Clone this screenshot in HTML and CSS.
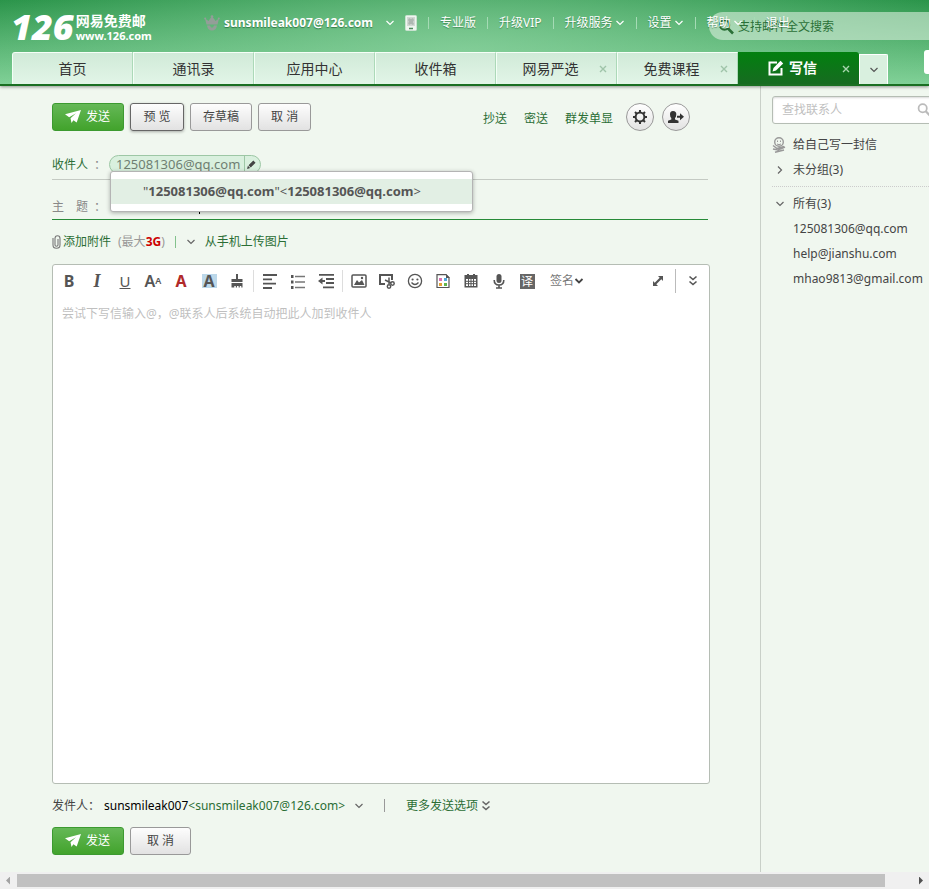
FILE: index.html
```html
<!DOCTYPE html>
<html lang="zh-CN">
<head>
<meta charset="utf-8">
<title>写信 - 126网易免费邮</title>
<link rel="stylesheet" href="styles.css">
</head>
<body>
<svg class="defs" aria-hidden="true">
  <symbol id="chev" viewBox="0 0 10 8"><path d="M1.500 2L5 5.500 8.500 2" fill="none" stroke="currentColor" stroke-width="1.200"/></symbol>
  <symbol id="dbl" viewBox="0 0 10 12"><path d="M1.500 1.500L5 4.500l3.500-3M1.500 6.500L5 9.500l3.500-3" fill="none" stroke="currentColor" stroke-width="1.600"/></symbol>
  <symbol id="close" viewBox="0 0 8 8"><path d="M1 1l6 6M7 1l-6 6" stroke="currentColor" stroke-width="1.400"/></symbol>
  <symbol id="plane" viewBox="0 0 18 14"><path d="M17 0L1 4.300 5.200 7.200 12 3.300 6.500 8.200 7.500 13 9.400 10.200 12.700 12.400z" fill="currentColor"/></symbol>
  <symbol id="glass" viewBox="0 0 16 16"><circle cx="6.500" cy="6" r="4.700" fill="none" stroke="currentColor" stroke-width="2"/><path d="M10 9.500l5 5" stroke="currentColor" stroke-width="2.600"/></symbol>
</svg>

<header class="header">
  <div class="top">
    <a class="logo" href="#"><span class="logo-num">126</span><span class="logo-text"><span class="logo-name">网易免费邮</span><span class="logo-url">www.126.com</span></span></a>
    <form class="search">
      <svg class="i16"><use href="#glass"/></svg>
      <input type="text" aria-label="支持邮件全文搜索" placeholder="支持邮件全文搜索">
    </form>
    <div class="account">
      <svg class="crown" viewBox="0 0 16 16"><path d="M1 3.500l3.500 2.500L8 1l3.500 5L15 3.500 13.500 9.500h-11zM3 10.500h3l1 2h2l1-2h3q-.8 5-5 5t-5-5z" fill="#939e98"/><circle cx="8" cy="1.500" r="1.300" fill="#939e98"/><circle cx="1.200" cy="3.600" r="1" fill="#939e98"/><circle cx="14.800" cy="3.600" r="1" fill="#939e98"/></svg>
      <a class="user" href="#">sunsmileak007@126.com</a>
      <svg class="chev user-chev"><use href="#chev"/></svg>
      <svg class="phone" viewBox="0 0 12 16"><rect x=".5" y=".5" width="11" height="15" rx="1" fill="#eef6f0" stroke="#c9e2d0"/><path d="M2 2h8v9H2z" fill="#d2d8d4"/><path d="M4 3l2 1 2-1 1 2-1 2 1 2-1 1-2-1-2 1-1-2 1-1-1-2z" fill="#aeb8b2"/><path d="M4 13.500h4" stroke="#4c8a5c" stroke-width="1.500"/></svg>
    </div>
    <nav class="links">
      <a href="#">专业版</a>
      <a href="#">升级VIP</a>
      <a href="#">升级服务<svg class="chev"><use href="#chev"/></svg></a>
      <a href="#">设置<svg class="chev"><use href="#chev"/></svg></a>
      <a href="#">帮助<svg class="chev"><use href="#chev"/></svg></a>
      <a href="#">退出</a>
    </nav>
  </div>
  <nav class="tabs">
    <a class="tab" href="#">首页</a>
    <a class="tab" href="#">通讯录</a>
    <a class="tab" href="#">应用中心</a>
    <a class="tab" href="#">收件箱</a>
    <a class="tab closable" href="#">网易严选<svg class="close"><use href="#close"/></svg></a>
    <a class="tab closable" href="#">免费课程<svg class="close"><use href="#close"/></svg></a>
    <a class="tab closable active" href="#"><svg class="i16" viewBox="0 0 16 16"><path d="M9 2.500H1.500v12h12V8" fill="none" stroke="#fff" stroke-width="2"/><path d="M4.500 11.500l1-3.500L12.500.8l2.700 2.700L8 10.500z" fill="#fff"/></svg>写信<svg class="close"><use href="#close"/></svg></a>
    <button class="more" aria-label="更多标签"><svg class="chev"><use href="#chev"/></svg></button>
    <span class="bubble"></span>
  </nav>
</header>

<div class="body">
  <main class="compose">
    <div class="actions">
      <button class="btn send"><svg class="plane"><use href="#plane"/></svg>发送</button>
      <button class="btn focus">预 览</button>
      <button class="btn">存草稿</button>
      <button class="btn">取 消</button>
      <div class="extras">
        <a href="#">抄送</a>
        <a href="#">密送</a>
        <a href="#">群发单显</a>
        <button class="round" aria-label="设置"><svg class="i16" viewBox="0 0 16 16"><circle cx="8" cy="8" r="4.400" fill="none" stroke="#333" stroke-width="2"/><path d="M8 1v3M8 12v3M1 8h3M12 8h3M3 3l2.200 2.200M10.800 10.800L13 13M13 3l-2.200 2.200M5.200 10.800L3 13" stroke="#333" stroke-width="2"/></svg></button>
        <button class="round" aria-label="添加联系人"><svg class="i18" viewBox="0 0 18 16"><path d="M6 2q3.500 0 3.300 3.600Q9.200 8 8 9v1.500l3.500 1.300V14H1v-2.200L4.300 10.500V9Q3 8 3 5.600 2.800 2 6 2zM10 6.800h3V4.300l4 3.500-4 3.500V8.800h-3z" fill="#333"/></svg></button>
      </div>
    </div>

    <div class="row to">
      <a class="label" href="#">收件人</a><span class="colon">：</span>
      <span class="chip"><span class="chip-name">125081306@qq.com</span><button class="edit" aria-label="编辑"><svg viewBox="0 0 10 10"><path d="M0 10l1-3.500L3.500 9zM1.700 5.800L7 .5 9.500 3 4.200 8.300z" fill="#444"/></svg></button></span>
      <div class="suggest"><div class="option">"<b>125081306@qq.com</b>"&lt;<b>125081306@qq.com</b>&gt;</div></div>
    </div>
    <div class="row subject">
      <label class="subject-label" for="subject">主&emsp;题</label><span class="colon">：</span>
      <input id="subject" type="text"><span class="caret"></span>
    </div>
    <div class="attach">
      <svg class="clip" viewBox="0 0 9 14"><path d="M1 3v7q0 3.300 3.500 3.300T8 10V3.500Q8 .7 5.500.7T3 3.500V10q0 1.200 1.500 1.200T6 10V4" fill="none" stroke="#777" stroke-width="1.100"/></svg>
      <a href="#">添加附件</a><span class="limit">(最大<b>3G</b>)</span><span class="bar"></span>
      <svg class="chev grey"><use href="#chev"/></svg>
      <a class="mobile" href="#">从手机上传图片</a>
    </div>

    <section class="editor">
      <div class="tools">
        <button class="tool" aria-label="加粗"><b>B</b></button>
        <button class="tool serif" aria-label="斜体"><i>I</i></button>
        <button class="tool" aria-label="下划线"><u>U</u></button>
        <button class="tool size" aria-label="字号">A<small>A</small></button>
        <button class="tool red" aria-label="文字颜色"><b>A</b></button>
        <button class="tool" aria-label="背景颜色"><b class="hl">A</b></button>
        <button class="tool" aria-label="清除格式"><svg viewBox="0 0 16 16"><path d="M7 1h2v5h4.500v3h-11V6H7zM2.500 10h11v4.500h-1.200V13h-1.500v1.500H9.600V13H8v1.500H6.800V13H5.300v1.500H2.500z" fill="#555"/></svg></button>
        <span class="sep"></span>
        <button class="tool" aria-label="对齐"><svg viewBox="0 0 16 16"><path d="M1 2h14M1 6.300h9M1 10.600h13M1 15h9" stroke="#555" stroke-width="1.800"/></svg></button>
        <button class="tool" aria-label="列表"><svg viewBox="0 0 16 16"><path d="M5 3.500h10M5 9h10M5 14.500h10" stroke="#777" stroke-width="1.500"/><path d="M1 2h2.500v3H1zM1 7.500h2.500v3H1zM1 13h2.500v3H1z" fill="#555"/></svg></button>
        <button class="tool" aria-label="缩进"><svg viewBox="0 0 16 16"><path d="M1 1.800h15M8 6h8M8 10h8M5 14.400h11M2 8h5" stroke="#555" stroke-width="1.800"/><path d="M0 8l4.500-3.500v7z" fill="#555"/></svg></button>
        <span class="sep"></span>
        <button class="tool" aria-label="图片"><svg viewBox="0 0 16 16"><rect x="1" y="2" width="14" height="12" rx="1" fill="none" stroke="#555" stroke-width="1.500"/><path d="M3 12l3-5 2 2.500L11 7l2.500 5z" fill="#555"/><circle cx="11" cy="5" r="1.200" fill="#555"/></svg></button>
        <button class="tool" aria-label="截图"><svg viewBox="0 0 16 16"><path d="M13 7V2H1v9h5" fill="none" stroke="#555" stroke-width="2"/><path d="M6 7l6 3M10 4.500v6.500" stroke="#555" stroke-width="1.500"/><circle cx="13.500" cy="10.500" r="1.700" fill="none" stroke="#555" stroke-width="1.500"/><circle cx="10" cy="13.500" r="1.700" fill="none" stroke="#555" stroke-width="1.500"/></svg></button>
        <button class="tool" aria-label="表情"><svg viewBox="0 0 16 16"><circle cx="8" cy="8" r="6.600" fill="none" stroke="#555" stroke-width="1.300"/><circle cx="5.600" cy="6.500" r="1.100" fill="#555"/><circle cx="10.400" cy="6.500" r="1.100" fill="#555"/><path d="M4.500 9.500q3.500 4 7 0" fill="none" stroke="#555" stroke-width="1.300"/></svg></button>
        <button class="tool" aria-label="信纸"><svg viewBox="0 0 16 16"><path d="M2 1.700h9l3 3v9.800H2z" fill="#fff" stroke="#555" stroke-width="1.200"/><path d="M11 1v4h4z" fill="#555"/><path d="M4 5h3v3H4z" fill="#d971b4"/><path d="M9 5h3v3H9z" fill="#54a9dc"/><path d="M4 10h3v3H4z" fill="#e3a233"/><path d="M9 10h3v3H9z" fill="#63b64c"/></svg></button>
        <button class="tool" aria-label="日程"><svg viewBox="0 0 16 16"><path d="M2 2h2V1h2v1h4V1h2v1h2.500v12.500h-13V2z" fill="#555"/><path d="M3 6h10v7H3z" fill="#fff"/><path d="M3 8.300h10M3 10.700h10M5.500 6v7M8 6v7M10.500 6v7" stroke="#555"/></svg></button>
        <button class="tool" aria-label="语音"><svg viewBox="0 0 16 16"><rect x="5.500" y="1" width="5" height="9" rx="2.500" fill="#555"/><path d="M3.200 7q0 5 4.800 5t4.800-5M8 12v3M5 15h6" fill="none" stroke="#555" stroke-width="1.600"/></svg></button>
        <button class="tool" aria-label="翻译"><span class="trans">译</span></button>
        <button class="sign">签名<svg viewBox="0 0 10 8"><path d="M1.500 2L5 5.500 8.500 2" fill="none" stroke="#444" stroke-width="1.800"/></svg></button>
        <span class="grow"></span>
        <button class="tool" aria-label="全屏"><svg class="expand" viewBox="0 0 12 12"><path d="M6 1h5v5L9.300 4.300 4.300 9.300 6 11H1V6l1.700 1.700 5-5z" fill="#555"/></svg></button>
        <span class="sep tall"></span>
        <button class="tool" aria-label="更多"><svg class="dbl"><use href="#dbl"/></svg></button>
      </div>
      <textarea aria-label="正文" placeholder="尝试下写信输入@，@联系人后系统自动把此人加到收件人"></textarea>
    </section>

    <div class="sender">
      <span>发件人：</span><a class="from" href="#"><span class="from-name">sunsmileak007</span>&lt;sunsmileak007@126.com&gt;</a><svg class="chev grey"><use href="#chev"/></svg>
      <span class="pipe"></span>
      <a class="options" href="#">更多发送选项<svg class="dbl"><use href="#dbl"/></svg></a>
    </div>
    <div class="actions">
      <button class="btn send"><svg class="plane"><use href="#plane"/></svg>发送</button>
      <button class="btn wide">取 消</button>
    </div>
  </main>

  <aside class="contacts">
    <div class="find"><input type="text" aria-label="查找联系人" placeholder="查找联系人"><svg class="i16"><use href="#glass"/></svg></div>
    <a class="item" href="#"><svg class="self" viewBox="0 0 14 16"><circle cx="7" cy="5" r="4.300" fill="none" stroke="#999" stroke-width="1.400"/><path d="M5.500 3.500v1.500M8.500 3.500v1.500M5 7q2 1.300 4 0" fill="none" stroke="#999"/><path d="M1 8.500l4 3 7-2M1 12l5 1 7-3M3 15.300l9-2.300" fill="none" stroke="#999" stroke-width="1.500"/></svg>给自己写一封信</a>
    <a class="item" href="#"><svg class="chev grey right"><use href="#chev"/></svg>未分组(3)</a>
    <hr>
    <a class="item" href="#"><svg class="chev grey"><use href="#chev"/></svg>所有(3)</a>
    <ul>
      <li><a href="#">125081306@qq.com</a></li>
      <li><a href="#">help@jianshu.com</a></li>
      <li><a href="#">mhao9813@gmail.com</a></li>
    </ul>
  </aside>
</div>

<div class="scrollbar"><span class="arrow left"></span><span class="track"><span class="thumb"></span></span><span class="arrow"></span></div>
</body>
</html>
```
FILE: styles.css
```css
* { box-sizing: border-box; }
body {
  margin: 0;
  min-height: 100vh;
  display: flex;
  flex-direction: column;
  background: #f0f7ef;
  color: #444;
  font: 12px/20px "Noto Sans", "Noto Sans CJK SC", sans-serif;
  overflow: hidden;
}
a { color: #2b6e35; text-decoration: none; }
button, input, textarea { font: inherit; color: inherit; }
button { padding: 0; border: 0; background: none; cursor: pointer; }
input, textarea { border: 0; outline: 0; background: none; padding: 0; min-width: 0; }
svg { display: block; flex: none; }
.defs { position: absolute; width: 0; height: 0; }
.chev { width: 10px; height: 8px; }
.dbl { width: 10px; height: 12px; }
.plane { width: 18px; height: 14px; }
.i16 { width: 16px; height: 16px; }
.i18 { width: 18px; height: 16px; }
.grey { color: #666; }
.grow { flex: 1; }

/* header */
.header {
  position: relative;
  z-index: 2;
  background: radial-gradient(ellipse 520px 150px at 50% 60%, rgba(146, 214, 165, .7), rgba(146, 214, 165, 0)), linear-gradient(#279247, #7fd096);
  border-bottom: 2px solid #1a6f22;
  box-shadow: 0 1px 3px rgba(0, 0, 0, .4);
}
.top { position: relative; display: flex; height: 52px; overflow: hidden; white-space: nowrap; }
.logo { display: flex; width: 192px; padding-left: 11px; color: #fff; }
.logo-num { font: italic 800 36px/54px "Open Sans", sans-serif; }
.logo-text { display: flex; flex-direction: column; padding: 12px 0 0 2px; }
.logo-name { font: bold 14px/16px "Noto Sans CJK SC", sans-serif; }
.logo-url { font: bold 11px/16px "Noto Sans", sans-serif; }
.account { display: flex; align-items: center; height: 46px; padding-left: 12px; position: relative; }
.crown { width: 16px; height: 16px; margin-right: 4px; }
.user { color: #fff; font-weight: bold; text-shadow: 0 1px 1px rgba(0, 60, 20, .5); }
.user-chev { margin: 0 10px 0 12px; color: #fff; }
.phone { width: 12px; height: 16px; }
.links { display: flex; align-items: center; height: 46px; position: relative; color: #fff; }
.links a { display: flex; align-items: center; color: #fff; gap: 2px; padding-left: 12px; margin-left: 11px; text-shadow: 0 1px 1px rgba(0, 60, 20, .4); background: linear-gradient(#a5dbb5, #a5dbb5) 0 50% / 1px 12px no-repeat; }
.search { position: absolute; left: 709px; right: 0; top: 12px; height: 28px; display: flex; align-items: center; gap: 4px; padding: 1px 0 0 9px; border-radius: 14px 0 0 14px; background: rgba(218, 238, 221, .6); color: #2b7037; }
.search input { flex: 1; }
.search input::placeholder { color: #2b7037; opacity: 1; }
.tabs { display: flex; align-items: flex-end; padding-left: 12px; height: 32px; }
.tab {
  position: relative; display: flex; align-items: center; justify-content: center;
  width: 121px; height: 32px; font-size: 14px; color: #333;
  background: linear-gradient(#d0ead8, #e2f5e7);
  border-top: 1px solid #f6fff8; border-right: 1px solid #acd9b8; border-left: 1px solid #f3fff6;
}
.tab:first-child { border-radius: 3px 0 0; }
.tab.closable { padding-right: 12px; }
.tab .close { position: absolute; right: 9px; top: 12px; width: 8px; height: 8px; color: #9fc4a9; }
.tab.active { gap: 5px; border: 0; border-radius: 0 3px 0 0; background: linear-gradient(#02800f, #176b21); color: #fff; font-weight: bold; }
.tab.active .close { color: #a9d6ae; top: 13px; }
.more { display: grid; place-items: center; width: 29px; height: 30px; border: 1px solid #fff; border-bottom: 0; border-radius: 0 2px 0 0; background: #d9f0df; color: #555; }
.bubble { width: 5px; height: 24px; margin: 0 0 10px auto; background: #fff; border-radius: 3px 0 0 3px; }

/* compose */
.body { display: flex; flex: 1; }
.compose { flex: 1; display: flex; flex-direction: column; padding: 17px 50px 17px 52px; white-space: nowrap; }
.actions { display: flex; gap: 6px; height: 28px; }
.btn { padding: 0 12px; height: 28px; border: 1px solid #999; border-radius: 3px; background: linear-gradient(#fdfdfd, #e2e2e2); color: #444; }
.btn.focus { width: 54px; border-color: #666; box-shadow: 0 1px 3px rgba(0, 0, 0, .3); }
.btn.wide { padding: 0 16px; }
.btn.send { display: flex; align-items: center; gap: 4px; padding: 0 11px; width: 72px; border-color: #3c9a30; background: linear-gradient(#65b857, #42a32c); color: #fff; }
.extras { display: flex; align-items: center; margin-left: auto; padding-right: 20px; }
.extras a { margin: 3px 17px 0 0; }
.extras a:nth-of-type(3) { margin-right: 13px; }
.round { display: grid; place-items: center; width: 28px; height: 28px; border: 1px solid #999; border-radius: 50%; background: linear-gradient(#fff, #e2e2e2); margin-right: 8px; }
.round:last-child { margin-right: 0; }
.row { position: relative; display: flex; align-items: center; margin-right: 2px; }
.to { margin-top: 20px; height: 29px; border-bottom: 1px solid #c4cac3; }
.label { width: 38px; }
.colon { width: 19px; padding-left: 4px; color: #888; }
.chip { display: flex; align-items: center; height: 19px; margin-bottom: 2px; border: 1px solid #9dc7a5; border-radius: 10px; background: #d9f0de; color: #6f7f72; overflow: hidden; }
.chip-name { padding: 0 4px 0 6px; font-size: 13px; line-height: 17px; }
.edit { display: grid; place-items: center; width: 16px; height: 18px; border-left: 1px solid #9dc7a5; }
.edit svg { width: 9px; height: 9px; margin-right: 2px; }
.suggest { position: absolute; z-index: 3; left: 58px; top: 20px; width: 363px; padding: 7px 0; border: 1px solid #b4b4b4; border-radius: 3px; background: #fff; box-shadow: 0 1px 4px rgba(0, 0, 0, .3); }
.option { padding-left: 32px; height: 25px; line-height: 25px; background: #e2efe4; color: #555; font-size: 13px; }
.subject { height: 40px; padding-top: 14px; border-bottom: 1px solid #278a38; }
.subject-label { width: 38px; color: #888; }
.subject input { width: 90px; }
.caret { width: 1px; height: 14px; background: #000; }
.attach { display: flex; align-items: center; height: 44px; }
.clip { width: 9px; height: 14px; margin-right: 2px; }
.limit { margin-left: 7px; color: #999; }
.limit b { color: #c00; }
.bar { width: 1px; height: 12px; margin: 0 10px; background: #83c28c; }
.mobile { margin-left: 9px; }

.editor { flex: 1; display: flex; flex-direction: column; min-height: 300px; border: 1px solid #b5bdb4; border-radius: 3px; background: #fff; }
.tools { display: flex; align-items: center; height: 32px; padding: 0 2px; color: #555; }
.tool { display: grid; place-items: center; width: 28px; height: 28px; font-size: 16px; line-height: 20px; }
.tool svg { width: 16px; height: 16px; }
.tool u { font-size: 15px; }
.serif i { font: italic bold 18px/20px "Liberation Serif", serif; }
.tool.size { display: flex; justify-content: center; font-size: 16px; font-weight: 600; line-height: 28px; }
.size small { font-size: 9px; line-height: 22px; }
.red { color: #b02a2a; }
.hl { display: block; width: 15px; height: 14px; line-height: 14px; background: #bcd8ea; }
.sep { width: 1px; height: 22px; margin: 0 2px; background: #ddd; }
.sep.tall { height: 24px; margin: 0 3px; background: #bbb; }
.tool .expand { width: 12px; height: 12px; }
.tool .dbl { width: 10px; height: 12px; }
.trans { width: 15px; height: 15px; background: #666; color: #fff; font-size: 12px; line-height: 15px; }
.sign { display: flex; align-items: center; padding-left: 9px; color: #777; }
.sign svg { width: 10px; height: 8px; }
.editor textarea { flex: 1; resize: none; padding: 7px 9px; line-height: 20px; }
textarea::placeholder, .find input::placeholder { color: #bfbfbf; opacity: 1; }

.sender { display: flex; align-items: center; height: 43px; }
.from { margin: 0 9px 0 4px; }
.from-name { color: #000; }
.pipe { width: 1px; height: 13px; margin: 0 21px 0 20px; background: #999; }
.options { display: flex; align-items: center; gap: 3px; }
.options .dbl { color: #666; }

/* contacts */
.contacts { flex: none; width: 169px; border-left: 1px solid #c9d0c8; padding: 10px 0 0 11px; white-space: nowrap; overflow: hidden; }
.find { display: flex; align-items: center; width: 166px; height: 28px; padding-left: 9px; margin-bottom: 8px; border: 1px solid #b5bdb4; border-radius: 3px; background: #fff; box-shadow: inset 0 1px 2px rgba(0, 0, 0, .15); }
.find input { flex: 1; }
.find svg { width: 14px; height: 14px; margin-right: 6px; color: #bbb; }
.item { display: flex; align-items: center; height: 25px; padding-left: 21px; color: #444; }
.item svg { margin: 0 8px 0 -18px; width: 10px; }
.item .self { width: 14px; height: 16px; margin: 0 7px 0 -21px; }
.right { transform: rotate(-90deg); }
hr { margin: 4px 0; border: 0; border-top: 1px dotted #ccc; }
ul { list-style: none; margin: 0; padding: 0 0 0 21px; line-height: 25px; }
ul a { color: #444; }

/* horizontal scrollbar */
.scrollbar { display: flex; align-items: center; height: 17px; background: #f0f0f0; }
.track { flex: 1; height: 13px; }
.thumb { display: block; width: 97%; height: 13px; background: #c1c1c1; }
.arrow { width: 17px; height: 8px; background: #505050; clip-path: polygon(7px 0, 11px 4px, 7px 8px); }
.arrow.left { background: #a3a3a3; clip-path: polygon(10px 0, 6px 4px, 10px 8px); }
```
